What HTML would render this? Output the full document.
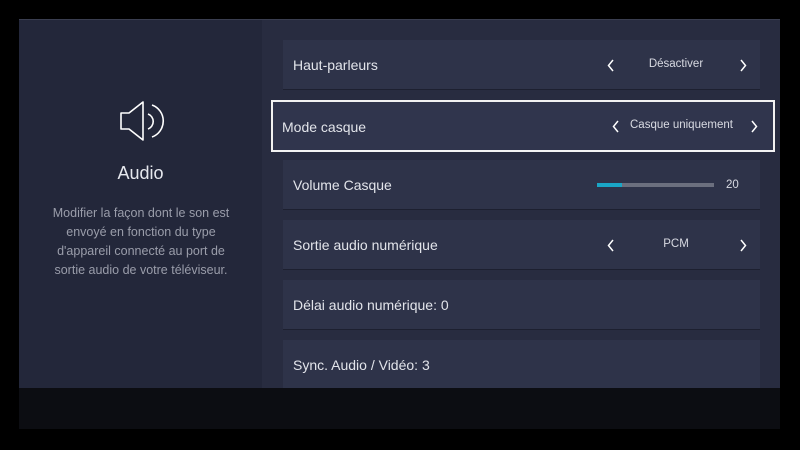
<!DOCTYPE html>
<html><head><meta charset="utf-8"><style>
body{margin:0;width:800px;height:450px;background:#000;position:relative;overflow:hidden;font-family:"Liberation Sans",sans-serif;}
.l{position:absolute;left:19px;top:19px;width:243px;height:369px;background:#23273a;border-top:1px solid #3a3e50}
.r{position:absolute;left:262px;top:19px;width:518px;height:369px;background:#282c40;border-top:1px solid #3a3e50}
.bot{position:absolute;left:19px;top:388px;width:761px;height:41px;background:#0c0d12}
.row{position:absolute;left:283px;width:477px;height:49px;background:#2e3349;border-bottom:1px solid #1d2030;color:#e2e4ea;font-size:14px}
.row .t{position:absolute;left:10px;top:17px}
.v{position:absolute;font-size:11.5px;color:#d8dae2;top:19px;text-align:center}
.ch{position:absolute;top:19px}
</style></head><body>
<div class="l"></div><div class="r"></div><div class="bot"></div>
<svg style="position:absolute;left:0;top:0" width="800" height="450"><g fill="none" stroke="#fff" stroke-width="1.6" stroke-linejoin="round">
<path d="M121 113 H129 L143 102 V140 L129 129 H121 Z"/>
<path d="M148 114 A8 8 0 0 1 148 129"/>
<path d="M152 105 A17 17 0 0 1 152 137"/></g></svg>
<div style="position:absolute;left:19px;width:243px;top:163px;text-align:center;color:#e6e8ee;font-size:18px">Audio</div>
<div style="position:absolute;left:41px;width:200px;top:204px;text-align:center;color:#9a9daa;font-size:12.5px;line-height:19px">Modifier la façon dont le son est envoyé en fonction du type d'appareil connecté au port de sortie audio de votre téléviseur.</div>
<div class="row" style="top:40px"><span class="t">Haut-parleurs</span>
<svg class="ch" style="left:324px" width="8" height="13"><path d="M6 1 L1.5 6.5 L6 12" fill="none" stroke="#fff" stroke-width="1.5"/></svg>
<span class="v" style="left:340px;width:106px;top:18px">Désactiver</span>
<svg class="ch" style="left:456px" width="8" height="13"><path d="M2 1 L6.5 6.5 L2 12" fill="none" stroke="#fff" stroke-width="1.5"/></svg></div>
<div class="row" style="top:100px;left:271px;width:500px;height:48px;border:2px solid #f2f2f2;background:#30354d"><span class="t" style="left:9px;top:17px">Mode casque</span>
<svg class="ch" style="left:339px;top:18px" width="8" height="13"><path d="M6 1 L1.5 6.5 L6 12" fill="none" stroke="#fff" stroke-width="1.5"/></svg>
<span class="v" style="left:357px;top:17px">Casque uniquement</span>
<svg class="ch" style="left:477px;top:18px" width="8" height="13"><path d="M2 1 L6.5 6.5 L2 12" fill="none" stroke="#fff" stroke-width="1.5"/></svg></div>
<div class="row" style="top:160px"><span class="t">Volume Casque</span><div style="position:absolute;left:314px;top:23px;width:117px;height:4px;background:#6b6f7e"><div style="width:25px;height:4px;background:#1aa6c6"></div></div><span class="v" style="left:443px;top:19px">20</span></div>
<div class="row" style="top:220px"><span class="t">Sortie audio numérique</span>
<svg class="ch" style="left:324px" width="8" height="13"><path d="M6 1 L1.5 6.5 L6 12" fill="none" stroke="#fff" stroke-width="1.5"/></svg>
<span class="v" style="left:340px;width:106px;top:18px">PCM</span>
<svg class="ch" style="left:456px" width="8" height="13"><path d="M2 1 L6.5 6.5 L2 12" fill="none" stroke="#fff" stroke-width="1.5"/></svg></div>
<div class="row" style="top:280px"><span class="t">Délai audio numérique: 0</span></div>
<div class="row" style="top:340px;height:48px;border:none"><span class="t">Sync. Audio / Vidéo: 3</span></div>
</body></html>
